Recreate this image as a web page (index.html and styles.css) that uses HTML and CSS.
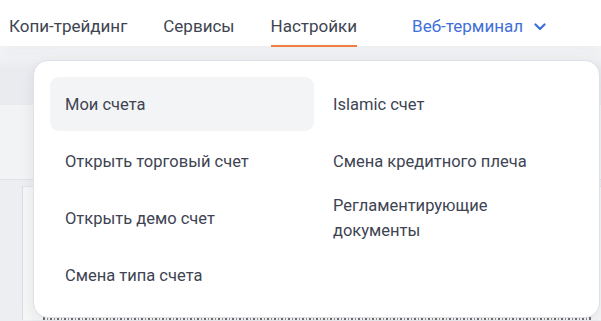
FILE: index.html
```html
<!DOCTYPE html>
<html lang="ru">
<head>
<meta charset="utf-8">
<link rel="stylesheet" href="styles.css">
</head>
<body>
<header class="nav">
  <a class="nav-item">Копи-трейдинг</a>
  <a class="nav-item">Сервисы</a>
  <a class="nav-item active">Настройки</a>
  <a class="nav-item web">Веб-терминал
    <svg class="chev" width="12" height="8" viewBox="0 0 12 8"><path d="M1.5 1.5 L6 6 L10.5 1.5" fill="none" stroke="#3f6fd9" stroke-width="2.2" stroke-linecap="round" stroke-linejoin="round"/></svg>
  </a>
</header>
<main class="page">
  <div class="toolbar"></div>
  <div class="subbar"></div>
  <div class="content">
    <div class="panel"><div class="panel-dots"></div></div>
  </div>
</main>
<div class="dropdown">
  <div class="col">
    <a class="item selected">Мои счета</a>
    <a class="item">Открыть торговый счет</a>
    <a class="item">Открыть демо счет</a>
    <a class="item">Смена типа счета</a>
  </div>
  <div class="col">
    <a class="item">Islamic счет</a>
    <a class="item">Смена кредитного плеча</a>
    <a class="item">Регламентирующие документы</a>
  </div>
</div>
</body>
</html>
```
FILE: styles.css
```css
* { box-sizing: border-box; }
html, body { margin: 0; padding: 0; }
body {
  width: 601px;
  height: 321px;
  overflow: hidden;
  background: #eceef1;
  font-family: Roboto, "Noto Sans", sans-serif;
  color: #3e4452;
  position: relative;
}
.nav {
  height: 46px;
  background: #fff;
  display: flex;
  align-items: stretch;
  padding-left: 9px;
  position: relative;
  z-index: 2;
  box-shadow: 0 6px 12px rgba(30, 40, 60, 0.05);
}
.nav-item {
  display: flex;
  align-items: center;
  font-size: 17px;
  color: #3e4452;
  margin-right: 36px;
  position: relative;
  padding-top: 6px;
}
.nav-item.active::after {
  content: "";
  position: absolute;
  left: 0;
  right: 0;
  bottom: -1px;
  height: 2px;
  background: #f08042;
}
.nav-item.web {
  color: #3f6fd9;
  margin-left: 19px;
}
.chev { margin-left: 11px; margin-top: 1px; }
.page { position: relative; z-index: 1; }
.toolbar {
  height: 59px;
  background: linear-gradient(#f7f8f9, #e9ebef 40%);
}
.subbar {
  height: 75px;
  background: #f2f3f4;
  border-bottom: 1px solid #dfe2e6;
}
.content {
  padding-left: 22px;
  padding-top: 6px;
}
.panel {
  background: #f6f6f7;
  border-left: 1px solid #d9dce1;
  border-top: 1px solid #e3e5e9;
  height: 134px;
  padding: 130px 0 0 20px;
}
.panel-dots {
  width: 548px;
  height: 3px;
  background: repeating-linear-gradient(90deg, #6b6f7a 0 2px, transparent 2px 4px, #9a8a70 4px 5px, transparent 5px 7px);
}
.dropdown {
  position: absolute;
  top: 60px;
  left: 33px;
  width: 567px;
  height: 258px;
  background: #fff;
  border: 1px solid #dde0e5;
  border-radius: 15px;
  box-shadow: 0 4px 14px rgba(30, 40, 60, 0.08);
  z-index: 3;
  display: grid;
  grid-template-columns: 264px 264px;
  column-gap: 4px;
  padding: 16px 0 0 16px;
}
.col {
  display: flex;
  flex-direction: column;
  gap: 3px;
}
.item {
  height: 54px;
  display: flex;
  align-items: center;
  padding: 0 15px;
  font-size: 16.5px;
  line-height: 25px;
  color: #3e4452;
  border-radius: 9px;
}
.item.selected { background: #f3f4f6; }
```
